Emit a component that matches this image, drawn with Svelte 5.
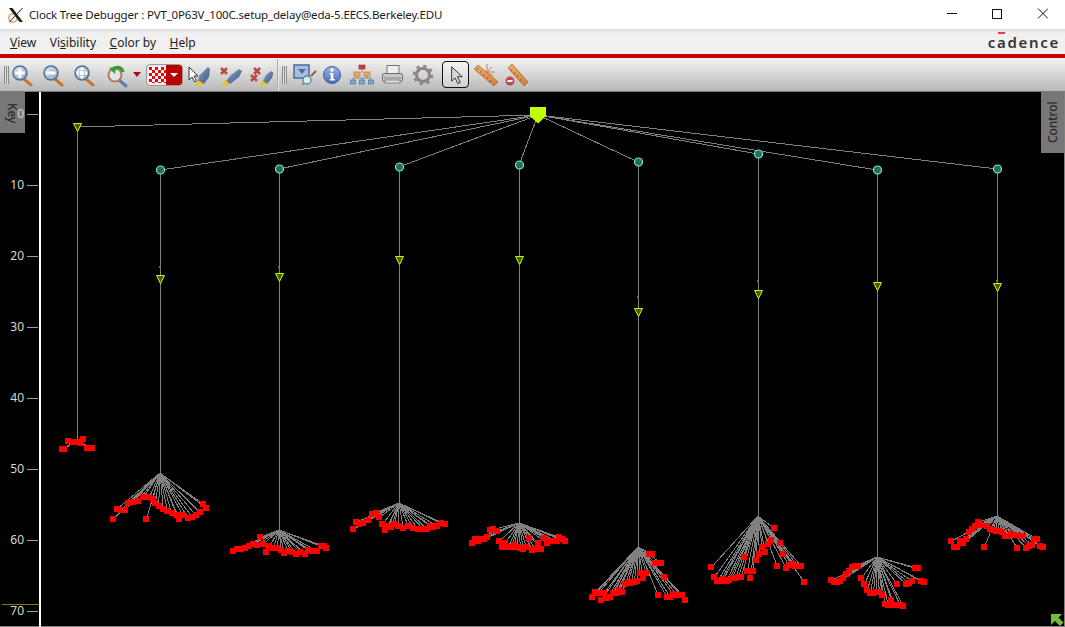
<script>
  const root = [538, 115];
  const c = (ox, oy, s) => s.split(' ').map((p) => { const [x, y] = p.split(',').map(Number); return [ox + x / 3, oy + y / 3]; });
  const columns = [
    { x: 77, apex: 440, tri: 127, pts: c(50, 430, '55,34 70,37 80,35 92,40 100,28 42,58 36,58 110,55 126,55') },
    { x: 160, node: 170, dot: 267, tri: 279, apex: 473, pts: c(50, 430, '190,268 289,268 200,238 212,240 226,240 235,220 250,215 265,212 280,202 298,202 308,208 316,220 326,228 340,238 352,243 365,250 380,255 388,268 398,255 415,265 425,260 437,255 450,247 460,223 469,235') },
    { x: 279, node: 169, dot: 267, tri: 277, apex: 530, pts: c(220, 490, '40,184 52,178 64,178 76,175 88,169 100,163 112,166 121,142 130,163 139,187 148,169 160,175 172,175 184,181 193,190 205,184 217,187 229,193 241,187 256,193 265,181 277,184 292,184 304,169 313,169 319,175') },
    { x: 399, node: 167, tri: 260, apex: 503, pts: c(220, 490, '400,118 409,97 418,103 430,100 445,91 455,73 469,70 478,82 487,103 496,121 505,109 514,112 523,103 535,109 550,115 565,109 580,115 595,118 610,118 622,118 631,109 640,112 652,109 664,100 676,103') },
    { x: 519, node: 165, tri: 260, apex: 523, pts: c(460, 510, '37,100 46,88 55,94 64,88 73,88 82,82 91,61 100,58 110,64 118,94 127,112 136,100 145,112 154,112 163,106 172,112 181,115 190,118 199,112 208,85 217,121 226,118 235,100 244,118 253,85 262,100 271,94 280,94 292,94 298,82 307,88 316,94') },
    { x: 638, node: 162, dot: 297, tri: 312, apex: 547, pts: c(460, 510, '397,262 406,247 415,250 424,271 433,250 442,265 451,262 460,250 469,250 478,241 487,247 496,223 505,217 514,220 523,217 532,214 541,190 550,205 559,190 568,133 577,133 586,160 604,160 613,202 595,256 622,262 631,262 640,253 652,256 667,256 676,271') },
    { x: 758, node: 154, dot: 281, tri: 294, apex: 516, pts: c(700, 510, '34,172 43,202 52,214 61,214 70,208 79,214 88,211 97,205 106,205 115,202 124,202 133,142 142,184 151,205 160,184 169,151 178,133 187,112 196,127 205,103 214,91 223,55 232,169 241,100 250,133 259,175 268,166 277,163 286,169 295,169 304,169 313,217') },
    { x: 877, node: 170, tri: 286, apex: 557, pts: c(700, 510, '394,211 403,217 412,217 421,214 430,205 439,193 448,184 457,172 466,169 475,169 484,205 493,223 502,241 511,250 520,250 529,247 538,247 547,256 556,283 565,286 574,271 583,286 592,223 601,286 610,289 619,223 628,220 637,214 646,175 655,175 664,214 673,217') },
    { x: 997, node: 169, dot: 281, tri: 287, apex: 516, pts: c(940, 510, '34,94 43,112 52,112 61,94 70,100 79,88 88,67 97,58 106,49 115,37 124,46 133,112 142,49 151,58 160,61 169,64 178,64 187,67 196,79 205,79 214,73 223,76 232,115 241,79 250,79 259,115 268,109 277,106 283,88 292,88 301,109 310,112') }
  ];
  const ticks = [0, 10, 20, 30, 40, 50, 60, 70].map((v, i) => ({ v, y: [114, 185, 256, 327, 398, 469, 540, 611][i] }));
</script>

<div class="app">
  <header class="titlebar">
    <svg class="xlogo" viewBox="0 0 16 16" width="16" height="16" aria-hidden="true">
      <circle cx="5" cy="11" r="4.2" fill="none" stroke="#e8a070" stroke-width="1.6" />
      <path d="M1 1h3.4l10.6 14h-3.4z" fill="#1a1a1a" />
      <path d="M14 1h1L2 15H1z" fill="#1a1a1a" />
    </svg>
    <span class="title">Clock Tree Debugger : PVT_0P63V_100C.setup_delay@eda-5.EECS.Berkeley.EDU</span>
    <svg class="winctl" width="101" height="11" viewBox="0 0 101 11" aria-hidden="true">
      <path d="M0 5.500h10" stroke="#111" shape-rendering="crispEdges" />
      <rect x="45.500" y="1" width="9" height="9" fill="none" stroke="#111" shape-rendering="crispEdges" />
      <path d="M91 .5l10 10M101 .5l-10 10" stroke="#111" fill="none" />
    </svg>
  </header>

  <nav class="menubar">
    <span class="m"><u>V</u>iew</span>
    <span class="m">Vi<u>s</u>ibility</span>
    <span class="m"><u>C</u>olor by</span>
    <span class="m"><u>H</u>elp</span>
    <span class="cadence">c<span class="a">a</span>dence</span>
  </nav>
  <div class="redline"></div>

  <div class="toolbar">
    <svg width="0" height="0" class="defs" aria-hidden="true">
      <defs>
        <linearGradient id="glass" x1="0" y1="0" x2="1" y2="1"><stop offset="0" stop-color="#e4eef8" /><stop offset="1" stop-color="#7d9dc0" /></linearGradient>
        <linearGradient id="pen" x1="0" y1="0" x2="1" y2="1"><stop offset="0" stop-color="#8aa0c8" /><stop offset="1" stop-color="#3f5680" /></linearGradient>
        <linearGradient id="blueball" x1="0" y1="0" x2="0" y2="1"><stop offset="0" stop-color="#9fb8e6" /><stop offset="1" stop-color="#4468b4" /></linearGradient>
        <linearGradient id="rul" x1="0" y1="0" x2="1" y2="1"><stop offset="0" stop-color="#f0b070" /><stop offset="1" stop-color="#cf7f38" /></linearGradient>
        <pattern id="chk" width="6" height="6" patternUnits="userSpaceOnUse"><rect width="6" height="6" fill="#fff" /><rect width="3" height="3" fill="#f00010" /><rect x="3" y="3" width="3" height="3" fill="#f00010" /></pattern>
      </defs>
    </svg>

    <span class="grip first"></span>

    <button class="tb" aria-label="Zoom in"><svg viewBox="0 0 26 26">
      <path d="M15 17l7 6" stroke="#c9762a" stroke-width="3" stroke-linecap="round" />
      <circle cx="11" cy="11" r="7" fill="url(#glass)" stroke="#54708f" stroke-width="1.5" />
      <path d="M11 6.500v9M6.500 11h9" stroke="#fff" stroke-width="3" />
    </svg></button>
    <button class="tb ml5" aria-label="Zoom out"><svg viewBox="0 0 26 26">
      <path d="M15 17l7 6" stroke="#c9762a" stroke-width="3" stroke-linecap="round" />
      <circle cx="11" cy="11" r="7" fill="url(#glass)" stroke="#54708f" stroke-width="1.5" />
      <path d="M6.500 11h9" stroke="#fff" stroke-width="3" />
    </svg></button>
    <button class="tb ml5" aria-label="Zoom fit"><svg viewBox="0 0 26 26">
      <path d="M15 17l7 6" stroke="#c9762a" stroke-width="3" stroke-linecap="round" />
      <circle cx="11" cy="11" r="7" fill="url(#glass)" stroke="#54708f" stroke-width="1.5" />
      <path d="M11 5l2.500 3h-5zM11 17l2.500-3h-5zM5 11l3-2.500v5zM17 11l-3-2.500v5z" fill="#fff" />
      <rect x="9" y="9" width="4" height="4" fill="#fff" />
    </svg></button>
    <button class="tb ml7" aria-label="Zoom history"><svg viewBox="0 0 26 26">
      <path d="M15 18l7 6" stroke="#5f7fa8" stroke-width="3" stroke-linecap="round" />
      <circle cx="11" cy="13" r="6.500" fill="#dfe6ec" stroke="#b87850" stroke-width="2" />
      <path d="M19 10C18 5 13 4 9 7" fill="none" stroke="#2f9a3a" stroke-width="3" />
      <path d="M5 6l7-1-1 7z" fill="#2f9a3a" />
    </svg></button>
    <svg class="caret" viewBox="0 0 8 5" width="8" height="5" aria-hidden="true"><path d="M0 0h8L4 5z" fill="#c00010" /></svg>

    <div class="combo">
      <svg class="swatch" width="17" height="16" viewBox="0 0 17 16" aria-hidden="true"><rect width="17" height="16" fill="url(#chk)" /></svg>
      <span class="combo-drop"><svg viewBox="0 0 8 4" width="8" height="4" aria-hidden="true"><path d="M0 0h8L4 4z" fill="#fff" /></svg></span>
    </div>

    <button class="tb ml3" aria-label="Highlight selection"><svg viewBox="0 0 26 26">
      <path d="M22 5l2 2-1 8-5 7-6-3 1-5z" fill="url(#pen)" />
      <path d="M12.500 18.500l5.500 3.500-9 2z" fill="#f2c400" />
      <path d="M3 5v13l3-3 2.500 5 2-1-2.500-5h4z" fill="#fff" stroke="#333" stroke-width="1" />
    </svg></button>
    <button class="tb ml5" aria-label="Clear highlight"><svg viewBox="0 0 26 26">
      <path d="M22 7l3 2-3 6-9 7-4-3 5-6z" fill="url(#pen)" />
      <path d="M8.500 18.500l4.500 3.500-9 2z" fill="#f2c400" />
      <path d="M4 6l6 6M10 6l-6 6" stroke="#b84a44" stroke-width="2.600" />
    </svg></button>
    <button class="tb ml6" aria-label="Clear all highlights"><svg viewBox="0 0 26 26">
      <path d="M22 9l2.500 2-1.500 5-5 6-4-3 3-6z" fill="url(#pen)" />
      <path d="M13.500 18.500l4.500 3.500-7 2z" fill="#f2c400" />
      <path d="M5 6l6 6M11 6l-6 6M2 13l6 6M8 13l-6 6" stroke="#b84a44" stroke-width="2.600" />
    </svg></button>

    <span class="sep"></span>
    <span class="grip second"></span>

    <button class="tb ml5" aria-label="Layout"><svg viewBox="0 0 26 26">
      <rect x="2" y="3" width="15" height="13" fill="#a9bedd" stroke="#4a6a9c" stroke-width="1.500" />
      <path d="M6 7h8l-4 5z" fill="#4a6a9c" />
      <path d="M19 14l5-5" stroke="#8a6038" stroke-width="2" />
      <circle cx="15" cy="18" r="4" fill="#dcebf2" stroke="#5f8398" stroke-width="1.300" />
      <path d="M12 21l-2 2" stroke="#5f8398" stroke-width="1.500" />
    </svg></button>
    <button class="tb ml1" aria-label="Information"><svg viewBox="0 0 26 26">
      <circle cx="13" cy="13" r="8.500" fill="url(#blueball)" stroke="#3b5aa0" />
      <circle cx="13" cy="8" r="1.700" fill="#fff" />
      <path d="M11 11h3.300v6H16v1.500h-5.200V17h1v-4.500h-1z" fill="#fff" />
    </svg></button>
    <button class="tb ml4" aria-label="Hierarchy"><svg viewBox="0 0 26 26">
      <path d="M13 7v4M4 16v2M13 16v2M22 16v2M4 16h18M8 14v2M18 14v2" stroke="#8a8a8a" fill="none" />
      <rect x="10" y="3" width="6" height="4" fill="#c8403c" stroke="#8c2a2a" stroke-width=".6" />
      <rect x="5" y="10" width="6" height="4" fill="#eeac5a" stroke="#b07020" stroke-width=".6" />
      <rect x="15" y="10" width="6" height="4" fill="#eeac5a" stroke="#b07020" stroke-width=".6" />
      <rect x="1.500" y="18" width="5" height="4" fill="#7fa8cc" stroke="#3f6a94" stroke-width=".6" />
      <rect x="10.500" y="18" width="5" height="4" fill="#7fa8cc" stroke="#3f6a94" stroke-width=".6" />
      <rect x="19.500" y="18" width="5" height="4" fill="#7fa8cc" stroke="#3f6a94" stroke-width=".6" />
    </svg></button>
    <button class="tb ml5" aria-label="Print"><svg viewBox="0 0 26 26">
      <rect x="7" y="3.500" width="12" height="9" fill="#eee" stroke="#777" />
      <rect x="2.500" y="11.500" width="20" height="8" rx="2" fill="#c8c8c8" stroke="#6e6e6e" />
      <path d="M4 16h17" stroke="#8a8a8a" />
      <rect x="5" y="18" width="15" height="3" fill="#dedede" stroke="#777" stroke-width=".8" />
    </svg></button>
    <button class="tb ml4" aria-label="Settings"><svg viewBox="0 0 26 26">
      <circle cx="13" cy="13" r="6.500" fill="none" stroke="#8b8480" stroke-width="3" />
      <circle cx="13" cy="13" r="9" fill="none" stroke="#8b8480" stroke-width="2.400" stroke-dasharray="3.200 3.870" />
    </svg></button>
    <button class="tb select" aria-label="Select"><svg viewBox="0 0 26 26">
      <path d="M9 5v15l3.500-3.500 3 6 2.500-1.200-3-6H20z" fill="#d8d8d8" stroke="#333" stroke-width="1" />
    </svg></button>
    <button class="tb ml4" aria-label="Ruler"><svg viewBox="0 0 26 26">
      <path d="M1 7l4-4 20 17-4 4z" fill="url(#rul)" stroke="#b06a2a" stroke-width=".8" />
      <path d="M5 6l-1 2M8 9l-1 2M11 12l-1 2M15 15l-1 2M18 18l-1 2" stroke="#8f5420" />
      <path d="M14 2v8M14 10l5-5M14 10h8M14 10l6 4" stroke="#c88450" />
    </svg></button>
    <button class="tb ml4" aria-label="Remove ruler"><svg viewBox="0 0 26 26">
      <path d="M5 6l4-4 16 18-4 4z" fill="url(#rul)" stroke="#b06a2a" stroke-width=".8" />
      <path d="M9 7l-1 2M12 10l-1 2M15 13l-1 2M18 17l-1 2" stroke="#8f5420" />
      <circle cx="7" cy="19" r="4.500" fill="#c8484c" />
      <rect x="4.500" y="18" width="5" height="2" fill="#fff" />
    </svg></button>
  </div>

  <main class="canvas">
    <div class="tab key">Key</div>
    <svg class="plot" viewBox="0 92 1065 535" width="1065" height="535" role="img" aria-label="Clock tree">
      <g shape-rendering="crispEdges">
        <rect x="39" y="92" width="2" height="535" fill="#fff" />
        <rect x="2" y="604" width="37" height="1" fill="#808000" />
        {#each ticks as t}
          <rect x="27" y={t.y} width="11" height="1" fill="#a0a0a0" />
        {/each}
      </g>
      {#each ticks as t}
        <text class="tick" x="24" y={t.y + 4} text-anchor="end">{t.v}</text>
      {/each}

      <g stroke="#808080" fill="none" shape-rendering="crispEdges">
        {#each columns as col}
          <line x1={root[0]} y1={root[1]} x2={col.x} y2={col.node ?? col.tri} />
          <line x1={col.x} y1={col.node ?? col.tri} x2={col.x} y2={col.apex} />
          {#each col.pts as p}
            <line x1={col.x} y1={col.apex} x2={p[0]} y2={p[1]} />
          {/each}
        {/each}
      </g>

      {#each columns as col}
        {#if col.node}
          <circle cx={col.x + 0.5} cy={col.node} r="4" fill="#2b6a5c" stroke="#70f0d0" stroke-width="1.200" />
        {/if}
        {#if col.dot}
          <rect x={col.x - 1} y={col.dot - 1} width="2" height="2" fill="#707070" />
        {/if}
        <path d="M{col.x - 3.500} {col.tri - 3.500}h8l-4 8z" fill="#4c5a00" stroke="#bfff00" stroke-width="1" />
      {/each}

      <g fill="#fe0000" shape-rendering="crispEdges">
        {#each columns as col}
          {#each col.pts as p}
            <rect x={Math.round(p[0]) - 3} y={Math.round(p[1]) - 3} width="6" height="6" />
          {/each}
        {/each}
      </g>

      <path d="M530 107h16v9l-8 7.500-8-7.500z" fill="#bfff00" />
      <path d="M1051 614h11l-3.500 3.500 5 5-3.500 3.500-5-5-4 4z" fill="#78b83c" />
    </svg>
    <div class="tab control">Control</div>
  </main>
</div>

<style>
  :global(body) { margin: 0; background: #000; }
  .app {
    width: 1065px;
    height: 627px;
    display: flex;
    flex-direction: column;
    overflow: hidden;
    font-family: "Noto Sans", sans-serif;
    font-size: 12px;
  }
  .titlebar {
    height: 29px;
    background: #fff;
    display: flex;
    align-items: center;
    padding-left: 8px;
    color: #1a1a1a;
    flex: none;
    box-sizing: border-box;
  }
  .xlogo { margin-right: 5px; flex: none; }
  .title { white-space: nowrap; font-size: 11.5px; letter-spacing: -0.17px; }
  .winctl { margin-left: auto; margin-right: 17px; margin-top: -2px; display: block; flex: none; }
  .menubar {
    height: 25px;
    flex: none;
    box-sizing: border-box;
    background: linear-gradient(#dcdcdc, #f0f0f0 4px);
    display: flex;
    align-items: center;
    padding: 1px 5px 0 10px;
    color: #222;
  }
  .m { margin-right: 13.500px; white-space: nowrap; }
  .cadence {
    margin-left: auto;
    font-size: 15px;
    font-weight: 600;
    letter-spacing: 1.700px;
    color: #333;
    line-height: 18px;
  }
  .a { position: relative; }
  .a::before {
    content: "";
    position: absolute;
    left: 1px;
    right: 2px;
    top: 0;
    height: 2px;
    background: #e04040;
  }
  .redline { height: 4px; background: #cc0000; flex: none; }
  .toolbar {
    height: 34px;
    flex: none;
    box-sizing: border-box;
    display: flex;
    align-items: center;
    padding-left: 4px;
    background: linear-gradient(#f0f0f0 0, #ececec 4px, #b9b9b9 33px);
    border-bottom: 1px solid #777;
  }
  .defs { position: absolute; }
  .tb {
    width: 26px;
    height: 26px;
    padding: 0;
    border: 0;
    background: none;
    flex: none;
    display: block;
  }
  .tb svg { width: 26px; height: 26px; display: block; }
  .ml1 { margin-left: 1px; }
  .ml3 { margin-left: 3px; }
  .ml4 { margin-left: 4px; }
  .ml5 { margin-left: 5px; }
  .ml6 { margin-left: 6px; }
  .ml7 { margin-left: 7px; }
  .grip {
    width: 5px;
    height: 18px;
    flex: none;
    background: repeating-linear-gradient(90deg, #8c8c8c 0 1px, #dedede 1px 2px);
  }
  .grip.second { margin-left: 3px; }
  .sep {
    width: 2px;
    height: 32px;
    margin-left: 2px;
    flex: none;
    background: linear-gradient(90deg, #aaa 50%, #eee 50%);
  }
  .caret { flex: none; margin-left: 3px; }
  .combo {
    width: 37px;
    height: 22px;
    margin-left: 5px;
    box-sizing: border-box;
    border: 1px solid #9a9a9a;
    border-radius: 4px;
    background: #e8e8e8;
    display: flex;
    align-items: stretch;
    flex: none;
    overflow: hidden;
  }
  .swatch { margin: 2px 0 0 2px; flex: none; }
  .combo-drop {
    flex: 1;
    background: #b80000;
    display: flex;
    align-items: center;
    justify-content: center;
  }
  .select {
    margin-left: 6px;
    width: 27px;
    height: 27px;
    box-sizing: border-box;
    border: 1px solid #111;
    border-radius: 4px;
    background: linear-gradient(#f4f4f4, #d0d0d0);
  }
  .select svg { width: 25px; height: 25px; }
  .canvas {
    position: relative;
    flex: 1;
    background: #000;
    box-shadow: inset 0 -1px 0 #808080, inset -1px 0 0 #808080;
    overflow: hidden;
  }
  .plot { position: absolute; inset: 0; display: block; }
  .tick { fill: #d8d8d8; font: 12px "Noto Sans", sans-serif; }
  .tab {
    position: absolute;
    top: 0;
    background: #777;
    color: #1c1c1c;
    font-size: 12px;
    display: flex;
    justify-content: center;
    box-sizing: border-box;
  }
  .key {
    left: 0;
    width: 25px;
    height: 41px;
    writing-mode: vertical-rl;
    padding-top: 11px;
    align-items: center;
    justify-content: flex-start;
  }
  .control {
    right: 1px;
    width: 23px;
    height: 61px;
    writing-mode: vertical-rl;
    transform: rotate(180deg);
    align-items: center;
  }
</style>
